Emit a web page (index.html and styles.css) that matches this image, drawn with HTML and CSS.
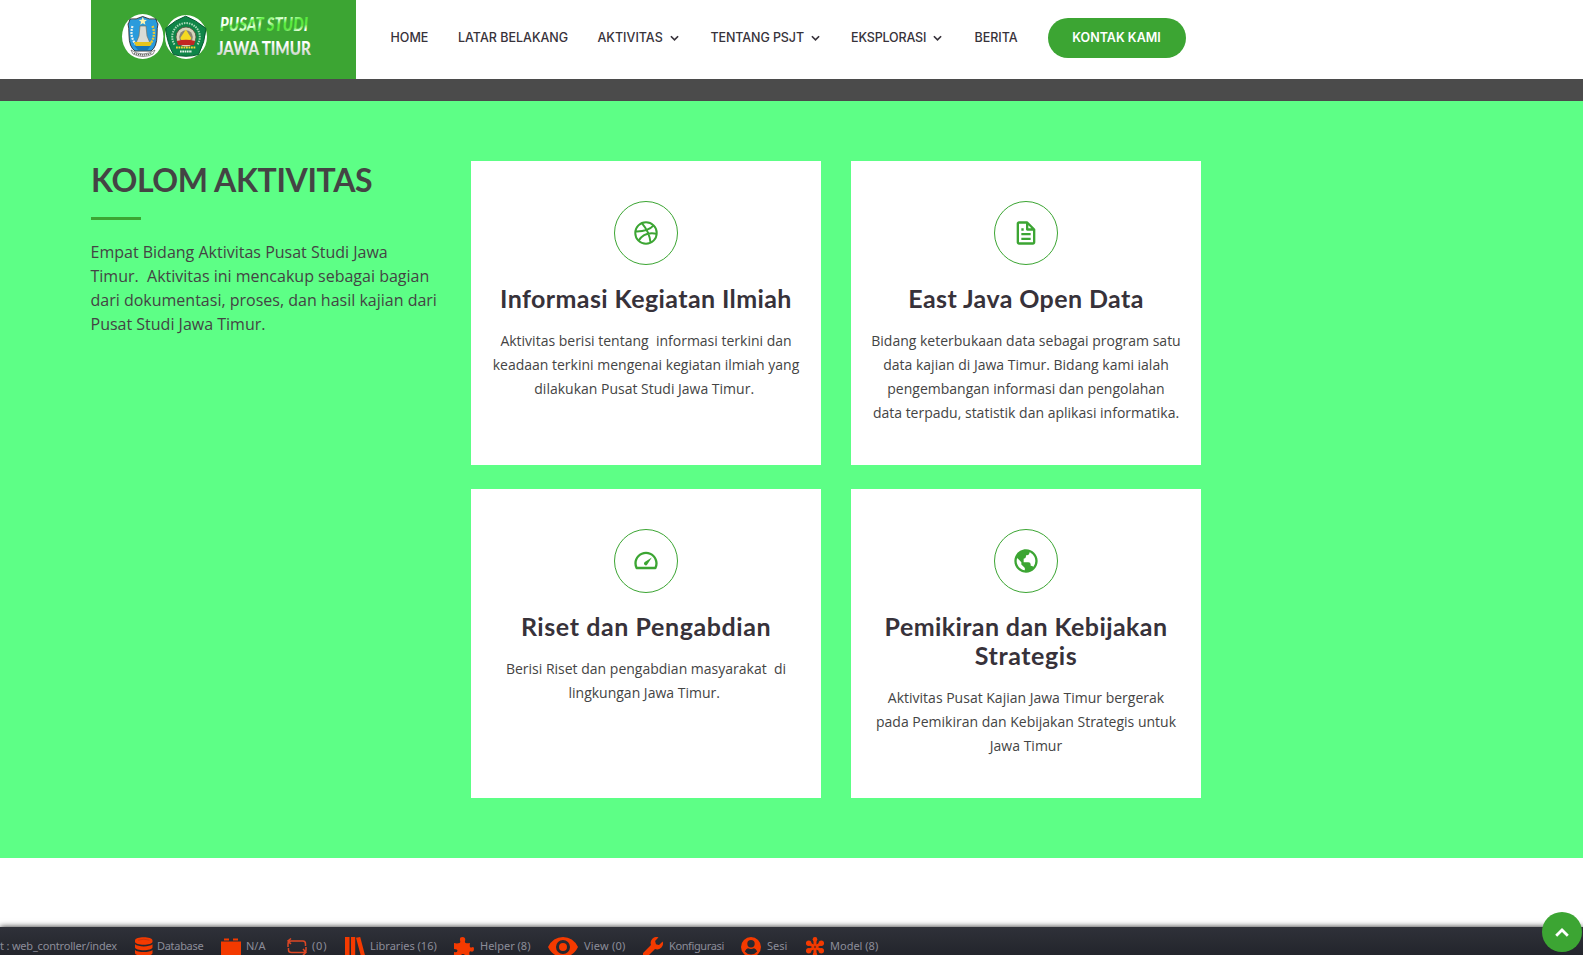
FILE: index.html
```html
<!DOCTYPE html>
<html lang="id">
<head>
<meta charset="utf-8">
<title>Pusat Studi Jawa Timur</title>
<link rel="stylesheet" href="styles.css">
</head>
<body>
<header class="header">
  <a class="logo">
    <svg width="265" height="79" viewBox="0 0 265 79">
      <defs>
        <linearGradient id="g1" x1="0" y1="0" x2="1" y2="1"><stop offset="0" stop-color="#fff"/><stop offset=".3" stop-color="#f4fff0"/><stop offset=".36" stop-color="#58ee3c"/><stop offset=".48" stop-color="#e4ffdf"/><stop offset=".6" stop-color="#58ee3c"/><stop offset=".75" stop-color="#5fe845"/><stop offset=".85" stop-color="#fff"/></linearGradient>
        <linearGradient id="g2" x1="0" y1="0" x2="0" y2="1"><stop offset=".3" stop-color="#fff"/><stop offset=".85" stop-color="#c9d3c7"/></linearGradient>
      </defs>
      <ellipse cx="51.7" cy="36.5" rx="20.7" ry="22.5" fill="#fff"/>
      <path d="M39 19q6 1 12.700-2.500Q58 20 65 19q1 4 2 5-1 3-1 11 0 12-6 16H44q-6-4-6-16 0-8-1-11 1-1 2-5z" fill="#2a9bdc" stroke="#2b2b2b" stroke-width=".9"/>
      <path d="M41.500 26q-3 10 3 18" fill="none" stroke="#e9f2ee" stroke-width="2.200" stroke-dasharray="2 1"/>
      <path d="M61.500 26q4 10-3 19" fill="none" stroke="#e8c93c" stroke-width="2.400" stroke-dasharray="2 1"/>
      <path d="M49 26h6l1 10 3 7H45l3-7z" fill="#d9dcd6" stroke="#706c55" stroke-width=".6"/>
      <path d="M51.800 17l1.200 2.700 2.900.2-2.200 1.900.7 2.900-2.600-1.500-2.500 1.500.7-2.900-2.200-1.900 2.800-.2z" fill="#fff3b0"/>
      <path d="M43 42h18l-2 4H45z" fill="#e7c51d"/><path d="M43.500 46h16l-3 4H47z" fill="#1676b8"/>
      <path d="M40 50q12 8 24 0l-2 4q-10 5-20 0z" fill="#fff" stroke="#444" stroke-width=".6"/>
      <path d="M43 53q9 4 18 0" fill="none" stroke="#555" stroke-width="1.300" stroke-dasharray="1.200 .8"/>
      <ellipse cx="95" cy="37" rx="21" ry="22" fill="#fff"/>
      <path d="M94.700 16.200Q105 20 115 28.500 114 42 107.500 54.500 95 58 82.500 54.500 76 43 74.700 28.500 84 20 94.700 16.200z" fill="#0f8548" stroke="#075c31" stroke-width="1"/>
      <path d="M83.500 44.500a13.800 13.800 0 1 1 23 0" fill="none" stroke="#a9d9b8" stroke-width="2" stroke-dasharray="1.500 1"/>
      <circle cx="95" cy="37" r="10" fill="#d8d3bd" stroke="#554f3b" stroke-width=".8"/>
      <circle cx="95" cy="37" r="6.800" fill="#8b8574"/>
      <path d="M94.800 29.500l5.500 8.500-1 2h-9l-1-2z" fill="#f5da22"/>
      <path d="M86 41q9-2.500 18 0l-1 4H87z" fill="#c22723"/>
      <path d="M85 47.500h20" stroke="#f0dc32" stroke-width="1.800" stroke-dasharray="1.800 .7"/>
      <path d="M89 51.500h12" stroke="#e9f4ec" stroke-width="2" stroke-dasharray="1.700 .6"/>
      <text class="logo-a" transform="translate(129 31.200) scale(.8 1)" textLength="110" lengthAdjust="spacing" fill="url(#g1)">PUSAT STUDI</text>
      <text class="logo-b" transform="translate(126 54.700) scale(.82 1)" textLength="114.500" lengthAdjust="spacing" fill="url(#g2)">JAWA TIMUR</text>
    </svg>
  </a>
  <nav class="nav">
    <a class="n1"><span>HOME</span></a>
    <a class="n2"><span>LATAR BELAKANG</span></a>
    <a class="n3"><span>AKTIVITAS</span><svg class="chev" viewBox="0 0 8 6"><path d="M.8 1L4 4.200 7.200 1"/></svg></a>
    <a class="n4"><span>TENTANG PSJT</span><svg class="chev" viewBox="0 0 8 6"><path d="M.8 1L4 4.200 7.200 1"/></svg></a>
    <a class="n5"><span>EKSPLORASI</span><svg class="chev" viewBox="0 0 8 6"><path d="M.8 1L4 4.200 7.200 1"/></svg></a>
    <a class="n6"><span>BERITA</span></a>
    <a class="contact"><span>KONTAK KAMI</span></a>
  </nav>
</header>
<div class="hero-edge"></div>
<section class="activities">
  <div class="intro">
    <h2>KOLOM AKTIVITAS</h2>
    <p>Empat Bidang Aktivitas Pusat Studi Jawa Timur.&nbsp; Aktivitas ini mencakup sebagai bagian dari dokumentasi, proses, dan hasil kajian dari Pusat Studi Jawa Timur.</p>
  </div>
  <div class="cards">
    <article class="card">
      <div class="icon"><svg viewBox="0 0 24 24"><g fill="none" stroke="#3ca533" stroke-width="1.700"><circle cx="12" cy="12" r="9.200"/><path d="M8.400 3.500Q15 11 15.900 20.300M2.800 10.600Q13.500 11 18.600 5.500M5.600 18.600Q10.500 10.500 21.200 12.600"/></g></svg></div>
      <h4>Informasi Kegiatan Ilmiah</h4>
      <p>Aktivitas berisi tentang&nbsp; informasi terkini dan keadaan terkini mengenai kegiatan ilmiah yang dilakukan Pusat Studi Jawa Timur.&nbsp;</p>
    </article>
    <article class="card">
      <div class="icon"><svg viewBox="0 0 24 24"><path d="M19.903 8.586a.997.997 0 0 0-.196-.293l-6-6a.997.997 0 0 0-.293-.196c-.03-.014-.062-.022-.094-.033a.991.991 0 0 0-.259-.051C13.040 2.011 13.021 2 13 2H6c-1.103 0-2 .897-2 2v16c0 1.103.897 2 2 2h12c1.103 0 2-.897 2-2V9c0-.021-.011-.04-.013-.062a.952.952 0 0 0-.051-.259c-.01-.032-.019-.063-.033-.093zM16.586 8H14V5.414L16.586 8zM6 20V4h6v5a1 1 0 0 0 1 1h5l.002 10H6z"/><path d="M8 12h8v2H8zm0 4h8v2H8zm0-8h2v2H8z"/></svg></div>
      <h4>East Java Open Data</h4>
      <p>Bidang keterbukaan data sebagai program satu data kajian di Jawa Timur. Bidang kami ialah pengembangan informasi dan pengolahan data&nbsp;terpadu, statistik dan aplikasi informatika.</p>
    </article>
    <article class="card">
      <div class="icon"><svg viewBox="0 0 24 24"><path d="M12 4C6.486 4 2 8.486 2 14a9.890 9.890 0 0 0 1.051 4.445c.17.34.516.555.895.555h16.107c.379 0 .726-.215.896-.555A9.890 9.890 0 0 0 22 14c0-5.514-4.486-10-10-10zm7.410 13H4.590A7.875 7.875 0 0 1 4 14c0-4.411 3.589-8 8-8s8 3.589 8 8a7.875 7.875 0 0 1-.59 3z"/><path d="M10.939 12.939a1.530 1.530 0 0 0 0 2.561 1.530 1.530 0 0 0 2.121-.44l3.962-6.038a.034.034 0 0 0 0-.035.033.033 0 0 0-.045-.01l-6.038 3.962z"/></svg></div>
      <h4 class="wide">Riset dan Pengabdian</h4>
      <p>Berisi Riset dan pengabdian masyarakat&nbsp; di lingkungan Jawa Timur.&nbsp;</p>
    </article>
    <article class="card">
      <div class="icon"><svg viewBox="0 0 24 24"><path d="M12 2C6.486 2 2 6.486 2 12s4.486 10 10 10 10-4.486 10-10S17.514 2 12 2zM4 12c0-.899.156-1.762.431-2.569L6 11l2 2v2l2 2 1 1v1.931C7.061 19.436 4 16.072 4 12zm14.330 4.873C17.677 16.347 16.687 16 16 16v-1a2 2 0 0 0-2-2h-4v-3a2 2 0 0 0 2-2V7h1a2 2 0 0 0 2-2v-.411C17.928 5.778 20 8.650 20 12a7.947 7.947 0 0 1-1.670 4.873z"/></svg></div>
      <h4>Pemikiran dan Kebijakan<br><span class="wide">Strategis</span></h4>
      <p>Aktivitas Pusat Kajian Jawa Timur bergerak pada Pemikiran dan Kebijakan Strategis untuk Jawa Timur</p>
    </article>
  </div>
</section>
<footer class="toolbar">
  <div class="t t0"><span>t : web_controller/index</span></div>
  <div class="t t1"><svg width="18" height="20" viewBox="0 0 18 20"><path d="M0 3.500C0-.8 17.500-.8 17.500 3.500v1.300c0 4-17.500 4-17.500 0zM0 7.300c3 2.800 14.500 2.800 17.500 0v3c0 4-17.500 4-17.500 0zM0 13c3 2.800 14.500 2.800 17.500 0v3c0 4-17.500 4-17.500 0z"/><path d="M3 3.200q6-2 11.500 0" stroke="#c23410" fill="none" stroke-width=".8"/></svg><span>Database</span></div>
  <div class="t t2"><svg width="20" height="20" viewBox="0 0 20 20"><path d="M0 4.500h20V20H0zM3 1.500h5v2H3zM12 1.500h5v2h-5z"/></svg><span>N/A</span></div>
  <div class="t t3"><svg width="20" height="20" viewBox="0 0 20 20"><path d="M1 10V7q0-3 3-3h12q2.500 0 2.500 3v2M1.500 11v2q0 2.500 3 2.500H16q3 0 3-2.500v-3M4 1.500L1 4l3 3M16 12l3 3.300-3 3" fill="none" stroke="#dd4724" stroke-width="1.500"/></svg><span>(0)</span></div>
  <div class="t t4"><svg width="20" height="20" viewBox="0 0 20 20"><path d="M0 0h4.500v20H0zM6 0h4.200v20H6zM11 .8l4.200-.8 5 19-4 1z"/></svg><span>Libraries (16)</span></div>
  <div class="t t5"><svg width="20" height="20" viewBox="0 0 20 20"><path d="M0 6q3 .8 5.500 0 1.300-.7.500-2.700Q5.500 0 8.500 0t2.700 3.300q-.8 2 .5 2.700 1.800.5 4.300 0-.5 3 0 4 .8 1 2.200.3Q20 9.500 20 12t-2 2.700q-2-.9-2.500.3-.5 2 .5 5h-5q.3-3-2-3t-2.500 3H0v-5q3 .8 3.400-1T0 12z"/></svg><span>Helper (8)</span></div>
  <div class="t t6"><svg width="30" height="20" viewBox="0 0 30 20"><path fill-rule="evenodd" d="M0 10Q5 0 15 0t15 10q-5 10-15 10T0 10zM15 3a7 7 0 1 0 0 14 7 7 0 0 0 0-14zm0 3a4 4 0 1 1 0 8 4 4 0 0 1 0-8z"/></svg><span>View (0)</span></div>
  <div class="t t7"><svg width="20" height="20" viewBox="0 0 20 20"><path d="M15.500.3A6 6 0 0 0 8 8L.8 15.200a2.800 2.800 0 0 0 4 4L12 12a6 6 0 0 0 7.700-7.500L16 8l-3-.8-.9-3.200z"/></svg><span>Konfigurasi</span></div>
  <div class="t t8"><svg width="20" height="20" viewBox="0 0 20 20"><path fill-rule="evenodd" d="M10 0a10 10 0 1 0 0 20 10 10 0 0 0 0-20zm0 3a3.700 3.700 0 1 1 0 7.400A3.700 3.700 0 0 1 10 3zM3.800 14.500Q5 11.500 7 11.300q3 1.500 6 0 2 .2 3.200 3.200-2.500 3-6.200 3t-6.200-3z"/></svg><span>Sesi</span></div>
  <div class="t t9"><svg width="18" height="20" viewBox="0 0 18 20"><g stroke="#f43a00" stroke-width="3" stroke-linecap="round"><path d="M9 2v16M2 6l14 8M2 14l14-8"/></g><g><circle cx="9" cy="2.300" r="2.300"/><circle cx="2.700" cy="6.200" r="2.700"/><circle cx="15.300" cy="6.200" r="2.700"/><circle cx="2.700" cy="13.800" r="2.700"/><circle cx="15.300" cy="13.800" r="2.700"/><circle cx="9" cy="17.700" r="2.300"/></g><circle cx="9" cy="10" r="1.200" fill="#8a2a14"/></svg><span>Model (8)</span></div>
</footer>
<a class="to-top"><svg width="14" height="9" viewBox="0 0 14 9"><path d="M1.200 7.800L7 2l5.800 5.800"/></svg></a>
</body>
</html>
```
FILE: styles.css
```css
* { box-sizing: border-box; }
body { margin: 0; height: 955px; overflow: hidden; background: #fff; color: #444; font-family: "Open Sans", sans-serif; }
h2, h4, p { margin: 0; }

.header { display: flex; height: 79px; padding-left: 91px; background: #fff; }
.logo { width: 265px; height: 79px; background: #3ca533; }
.logo svg { display: block; }
.logo-a { font: italic 900 18.500px Lato, sans-serif; }
.logo-b { font: 900 18.500px Lato, sans-serif; }
.nav { display: flex; align-items: center; height: 76px; margin-left: 34.500px; font: 450 12.500px Inter, sans-serif; color: #37323a; white-space: nowrap; }
.nav a { display: flex; align-items: center; margin-right: 30px; }
.nav span { padding-bottom: 1px; }
.n1 { width: 37.500px; }
.n2 { width: 109.500px; }
.n3 { width: 83px; }
.n4 { width: 110.500px; letter-spacing: -.1px; }
.n5 { width: 93.500px; letter-spacing: -.15px; }
.n6 { width: 43px; }
.chev { width: 9px; height: 7px; margin-left: 7px; fill: none; stroke: #37323a; stroke-width: 1.500; }
.nav .contact { justify-content: center; width: 138px; height: 40px; margin: 0; border-radius: 20px; background: #3ca533; color: #fff; font-weight: 600; }

.hero-edge { height: 22px; background: #4b4b4b; }
.activities { display: flex; gap: 30px; height: 757px; padding: 60px 0 0 91px; background: #5dff86; }
.intro { width: 350px; font-size: 16px; line-height: 24px; }
.intro h2 { height: 59px; margin-bottom: 20px; font: 700 32px/37px Lato, sans-serif; letter-spacing: -.35px; white-space: nowrap; }
.intro h2::after { content: ""; display: block; width: 50px; height: 3px; margin-top: 19px; background: #3ca533; }
.intro p { margin-left: -.5px; }
.cards { display: grid; grid-template-columns: 350px 350px; gap: 24px 30px; align-content: start; }
.card { padding: 40px 20px; background: #fff; text-align: center; }
.icon { display: flex; align-items: center; justify-content: center; width: 64px; height: 64px; margin: 0 auto 20px; border: 1px solid #3ca533; border-radius: 50%; }
.icon svg { width: 28px; height: 28px; fill: #3ca533; }
.card h4 { margin: -1px 0 16px; color: #37323a; font: 700 25px/29px Lato, sans-serif; letter-spacing: .4px; white-space: nowrap; }
.card h4.wide, .card .wide { letter-spacing: .58px; }
.card p { font-size: 14px; line-height: 24px; }

.toolbar { position: absolute; left: 0; bottom: 0; width: 100%; height: 28px; display: flex; padding-top: 10px; background: linear-gradient(#2f3139, #23252c); box-shadow: 0 0 6px #222; color: #8c8d99; font: 11px/18px "Noto Sans", sans-serif; white-space: nowrap; }
.t { display: flex; gap: 6px; height: 18px; overflow: hidden; flex: none; }
.t svg { flex: none; fill: #f43a00; }
.t0 { width: 135px; letter-spacing: -.19px; }
.t1 { width: 86px; gap: 4px; letter-spacing: -.3px; }
.t2 { width: 66px; gap: 5px; }
.t3 { width: 58px; gap: 5px; letter-spacing: .8px; }
.t4 { width: 109px; gap: 5px; }
.t5 { width: 94px; }
.t6 { width: 95px; letter-spacing: .2px; }
.t7 { width: 98px; letter-spacing: -.38px; }
.t8 { width: 65px; }
.t9 { width: 90px; }

.to-top { position: absolute; left: 1542px; top: 912px; display: flex; align-items: center; justify-content: center; width: 40px; height: 40px; border-radius: 50%; background: #3ca533; }
.to-top path { fill: none; stroke: #fff; stroke-width: 2.800; }
```
